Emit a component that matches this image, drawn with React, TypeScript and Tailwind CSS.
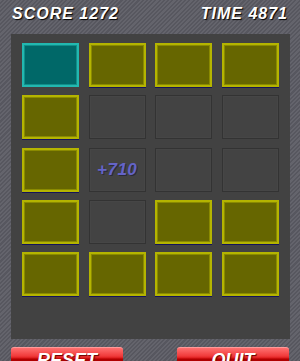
type Cell = 'teal' | 'yellow' | 'empty'

const ROWS: Cell[][] = [
  ['teal', 'yellow', 'yellow', 'yellow'],
  ['yellow', 'empty', 'empty', 'empty'],
  ['yellow', 'empty', 'empty', 'empty'],
  ['yellow', 'empty', 'yellow', 'yellow'],
  ['yellow', 'yellow', 'yellow', 'yellow'],
]

function Tile({ kind, label }: { kind: Cell; label?: string }) {
  if (kind === 'teal') {
    return (
      <div className="h-[44px] border-2 border-[#22b8b0] bg-[#006868] shadow-[inset_0_0_0_1px_#0f8f8a]" />
    )
  }
  if (kind === 'yellow') {
    return (
      <div className="h-[44px] border-2 border-[#b4b400] bg-[#666600] shadow-[inset_0_0_0_1px_#8a8a00,0_1px_0_#14145a]" />
    )
  }
  return (
    <div className="flex h-[44px] items-center justify-center border border-[#333333] bg-[#434343] shadow-[inset_0_0_0_1px_#464646]">
      {label && (
        <span className="text-[17px] font-bold italic leading-none tracking-[0.5px] text-[#6464c8] [text-shadow:1px_1px_0_#2a2a3a]">
          {label}
        </span>
      )}
    </div>
  )
}

function Button({ children }: { children: string }) {
  return (
    <div className="h-[28px] w-[112px] rounded-t-[3px] border-t border-[#ff9a9a] bg-[linear-gradient(to_bottom,#ff7070_0%,#f03a3a_30%,#d81818_38%,#b00000_40%,#a80000_100%)] pt-[3px] text-center text-[18px] font-bold italic leading-[18px] text-white [text-shadow:1px_1px_1px_#600]">
      {children}
    </div>
  )
}

export default function App() {
  return (
    <div
      className="h-[361px] w-[300px] overflow-hidden bg-[#5f5f67] bg-[repeating-linear-gradient(135deg,#64646c_0px,#64646c_1.5px,#57575f_1.5px,#57575f_3px)] font-['Liberation_Sans',Arial,sans-serif]"
    >
      <div className="flex h-[34px] items-start justify-between pl-[12px] pr-[12px] pt-[4px] text-[16px] font-bold italic leading-[20px] tracking-[1px] text-white [text-shadow:1px_1px_1px_#000]">
        <span>SCORE 1272</span>
        <span>TIME 4871</span>
      </div>

      <div className="mx-[11px] h-[305px] w-[279px] bg-[#424242] pl-[11px] pt-[9px]">
        <div className="grid grid-cols-[57px_57px_57px_57px] gap-x-[9.7px] gap-y-[8.35px]">
          {ROWS.map((row, r) =>
            row.map((c, i) => (
              <Tile key={`${r}-${i}`} kind={c} label={r === 2 && i === 1 ? '+710' : undefined} />
            ))
          )}
        </div>
      </div>

      <div className="mt-[8px] flex justify-between px-[11px]">
        <Button>RESET</Button>
        <Button>QUIT</Button>
      </div>
    </div>
  )
}
